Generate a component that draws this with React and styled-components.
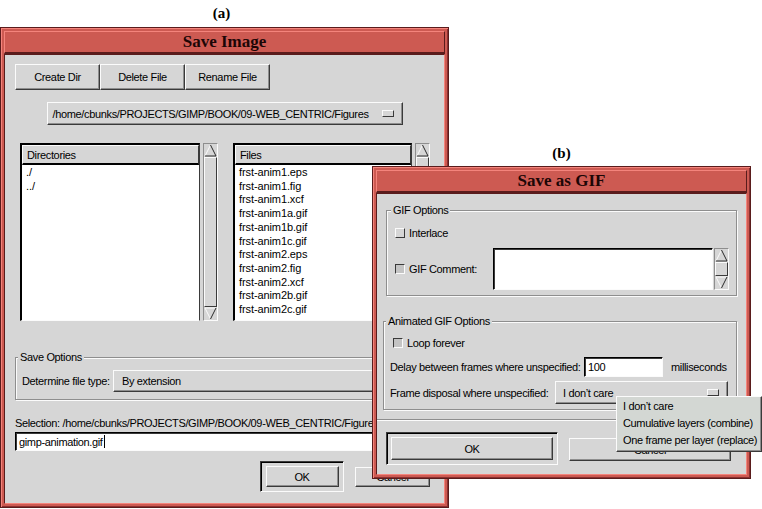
import React from 'react';
import styled, { createGlobalStyle, css } from 'styled-components';

const GlobalStyle = createGlobalStyle`
  html, body {
    margin: 0;
    padding: 0;
    background: #ffffff;
  }
  body {
    width: 762px;
    height: 509px;
    overflow: hidden;
    font-family: "Liberation Sans", Arial, sans-serif;
    font-size: 11px;
    letter-spacing: -0.35px;
    color: #000;
  }
  * {
    box-sizing: border-box;
  }
`;

const GRAY = '#d6d6d6';

const raised = css`
    border: 1px solid;
    border-color: #fbfbfb #3a3a3a #3a3a3a #fbfbfb;
    box-shadow: inset -1px -1px 0 #8e8e8e;
`;

const sunken = css`
    border: 1px solid;
    border-color: #3a3a3a #fbfbfb #fbfbfb #3a3a3a;
    box-shadow: inset 1px 1px 0 #000;
`;

const Desktop = styled.div`
    position: relative;
    width: 762px;
    height: 509px;
    overflow: hidden;
    background: #fff;
`;

// windows sit on a free desktop and overlap, so they are placed by coordinates
const Figure = styled.div`
    position: absolute;
    left: ${p => p.$x}px;
    top: ${p => p.$y}px;
    width: ${p => p.$w}px;
    z-index: ${p => p.$z};
`;

const Caption = styled.div`
    height: ${p => p.$h}px;
    display: flex;
    align-items: center;
    justify-content: center;
    padding-right: ${p => p.$shift || 0}px;
    font-family: "Liberation Serif", "Times New Roman", serif;
    font-weight: bold;
    font-size: 15px;
    letter-spacing: 0;
`;

const Frame = styled.div`
    height: ${p => p.$h}px;
    display: flex;
    flex-direction: column;
    background: #cd5a52;
    border: 1px solid #5a1c1c;
    box-shadow: inset 1px 1px 0 #f4847c, inset -1px -1px 0 #8a3030;
    padding: 3px;
`;

const TitleBar = styled.div`
    height: 23px;
    flex: none;
    display: flex;
    align-items: center;
    justify-content: center;
    background: #cd5a52;
    border: 1px solid;
    border-color: #f4847c #5a1c1c #5a1c1c #f4847c;
    border-bottom-width: 2px;
    font-family: "Liberation Serif", "Times New Roman", serif;
    font-size: 17px;
    font-weight: bold;
    letter-spacing: 0;
    color: #1c0606;
`;

const Body = styled.div`
    flex: 1;
    background: ${GRAY};
    border: 1px solid;
    border-color: #5a1c1c #f4847c #f4847c #5a1c1c;
    display: flex;
    flex-direction: column;
    overflow: hidden;
`;

const Row = styled.div`
    display: flex;
    align-items: ${p => p.$align || 'center'};
    justify-content: ${p => p.$justify || 'flex-start'};
    margin-top: ${p => p.$mt || 0}px;
    padding-left: ${p => p.$pl || 0}px;
    padding-right: ${p => p.$pr || 0}px;
    flex: none;
`;

const Button = styled.div`
    width: ${p => p.$w}px;
    height: ${p => p.$h}px;
    margin-left: ${p => p.$ml || 0}px;
    display: flex;
    align-items: center;
    justify-content: center;
    background: ${GRAY};
    ${raised};
    flex: none;
`;

const DefaultRing = styled.div`
    width: ${p => p.$w}px;
    height: ${p => p.$h}px;
    display: flex;
    align-items: center;
    justify-content: center;
    ${sunken};
    flex: none;
`;

const OptionMenu = styled.div`
    width: ${p => p.$w}px;
    height: ${p => p.$h}px;
    margin-left: ${p => p.$ml || 0}px;
    display: flex;
    align-items: center;
    justify-content: space-between;
    padding: 0 8px 0 ${p => p.$pl || 6}px;
    background: ${GRAY};
    ${raised};
    flex: none;
    white-space: nowrap;
`;

const OptionMark = styled.span`
    width: 12px;
    height: 7px;
    flex: none;
    ${raised};
    box-shadow: none;
`;

const ListBox = styled.div`
    width: ${p => p.$w}px;
    height: 178px;
    margin-left: ${p => p.$ml || 0}px;
    background: #fff;
    border: 1px solid;
    border-width: 2px 1px 1px 2px;
    border-color: #000 #3a3a3a #fbfbfb #000;
    display: flex;
    flex-direction: column;
    flex: none;
`;

const ListHeader = styled.div`
    height: 20px;
    flex: none;
    display: flex;
    align-items: center;
    padding-left: 4px;
    background: ${GRAY};
    border: 1px solid;
    border-color: #fbfbfb #3a3a3a #000 #fbfbfb;
    border-bottom-width: 2px;
`;

const ListItems = styled.div`
    padding: 1px 0 0 4px;
    line-height: 13.7px;
    letter-spacing: -0.1px;
    white-space: nowrap;
`;

const ScrollTrack = styled.div`
    width: 15px;
    height: ${p => p.$h}px;
    margin-left: ${p => p.$ml || 0}px;
    display: flex;
    flex-direction: column;
    background: ${GRAY};
    border: 1px solid;
    border-color: #8e8e8e #fbfbfb #fbfbfb #8e8e8e;
    flex: none;
`;

const ScrollThumb = styled.div`
    flex: 1;
    ${raised};
    box-shadow: none;
`;

const Arrow = ({ down }) => (
    <svg width="13" height="13" viewBox="0 0 13 13" style={{ display: 'block', flex: 'none' }}>
        {down ? (
            <>
                <polygon points="1,1 12,1 6.5,12" fill={GRAY} />
                <path d="M1 1 L12 1 M1 1 L6.5 12" stroke="#fbfbfb" fill="none" />
                <path d="M12 1 L6.5 12" stroke="#2a2a2a" fill="none" />
            </>
        ) : (
            <>
                <polygon points="6.5,1 12,12 1,12" fill={GRAY} />
                <path d="M1 12 L6.5 1" stroke="#fbfbfb" fill="none" />
                <path d="M6.5 1 L12 12 L1 12" stroke="#2a2a2a" fill="none" />
            </>
        )}
    </svg>
);

const Scrollbar = ({ h, ml }) => (
    <ScrollTrack $h={h} $ml={ml}>
        <Arrow />
        <ScrollThumb />
        <Arrow down />
    </ScrollTrack>
);

const Group = styled.fieldset`
    margin: ${p => p.$mt}px 0 0 ${p => p.$ml}px;
    width: ${p => p.$w}px;
    padding: ${p => p.$pt}px 6px ${p => p.$pb}px ${p => p.$pl}px;
    border: 1px solid #8e8e8e;
    box-shadow: 1px 1px 0 #fbfbfb, inset 1px 1px 0 #fbfbfb;
    flex: none;
    min-width: 0;
`;

const Legend = styled.legend`
    padding: 0 2px;
    margin-left: -4px;
    line-height: 13px;
    background: ${GRAY};
`;

const Label = styled.span`
    width: ${p => (p.$w ? `${p.$w}px` : 'auto')};
    margin-left: ${p => p.$ml || 0}px;
    flex: none;
    white-space: nowrap;
`;

const Check = styled.span`
    width: 10px;
    height: 10px;
    margin-left: ${p => p.$ml || 0}px;
    flex: none;
    background: ${p => (p.$on ? '#c4c4c4' : GRAY)};
    border: 1px solid;
    border-color: ${p => (p.$on ? '#3a3a3a #fbfbfb #fbfbfb #3a3a3a' : '#fbfbfb #3a3a3a #3a3a3a #fbfbfb')};
`;

const Entry = styled.div`
    width: ${p => p.$w}px;
    height: ${p => p.$h}px;
    margin-left: ${p => p.$ml || 0}px;
    margin-top: ${p => p.$mt || 0}px;
    display: flex;
    align-items: center;
    padding-left: 3px;
    background: #fff;
    border: 1px solid;
    border-color: #000 #fbfbfb #fbfbfb #000;
    box-shadow: inset 1px 1px 0 #3a3a3a;
    flex: none;
    white-space: nowrap;
`;

const Caret = styled.span`
    width: 1px;
    height: 13px;
    margin-left: 1px;
    background: #000;
`;

const SelectionLine = styled.div`
    margin-top: 17px;
    padding-left: 10px;
    line-height: 13px;
    white-space: nowrap;
    flex: none;
`;

const Separator = styled.div`
    margin-top: 9px;
    height: 2px;
    border-top: 1px solid #8e8e8e;
    border-bottom: 1px solid #fbfbfb;
    flex: none;
`;

const PopupMenu = styled.div`
    position: absolute;
    left: 616px;
    top: 396px;
    width: 146px;
    height: 56px;
    z-index: 10;
    padding: 1px 0 0 6px;
    background: #d3d7d3;
    border: 1px solid;
    border-color: #fbfbfb #3a3a3a #3a3a3a #fbfbfb;
    box-shadow: inset -1px -1px 0 #8e8e8e;
`;

const MenuItem = styled.div`
    line-height: 17px;
    white-space: nowrap;
`;

const files = [
    'frst-anim1.eps', 'frst-anim1.fig', 'frst-anim1.xcf', 'frst-anim1a.gif',
    'frst-anim1b.gif', 'frst-anim1c.gif', 'frst-anim2.eps', 'frst-anim2.fig',
    'frst-anim2.xcf', 'frst-anim2b.gif', 'frst-anim2c.gif',
];

const SaveImage = () => (
    <Figure $x={0} $y={0} $w={449} $z={1}>
        <Caption $h={27} $shift={6}>(a)</Caption>
        <Frame $h={481}>
            <TitleBar>Save Image</TitleBar>
            <Body>
                <Row $mt={9} $pl={10}>
                    <Button $w={85} $h={26}>Create Dir</Button>
                    <Button $w={85} $h={26}>Delete File</Button>
                    <Button $w={85} $h={26}>Rename File</Button>
                </Row>
                <Row $mt={12} $justify="center">
                    <OptionMenu $w={356} $h={23} $pl={5}>
                        /home/cbunks/PROJECTS/GIMP/BOOK/09-WEB_CENTRIC/Figures
                        <OptionMark />
                    </OptionMenu>
                </Row>
                <Row $mt={18} $pl={15} $align="flex-start">
                    <ListBox $w={180}>
                        <ListHeader>Directories</ListHeader>
                        <ListItems>
                            <div>./</div>
                            <div>../</div>
                        </ListItems>
                    </ListBox>
                    <Scrollbar h={178} ml={3} />
                    <ListBox $w={179} $ml={15}>
                        <ListHeader>Files</ListHeader>
                        <ListItems>
                            {files.map(f => <div key={f}>{f}</div>)}
                        </ListItems>
                    </ListBox>
                    <Scrollbar h={178} ml={3} />
                </Row>
                <Group $mt={30} $ml={10} $w={420} $pt={6} $pb={7} $pl={6}>
                    <Legend>Save Options</Legend>
                    <Row>
                        <Label $w={91}>Determine file type:</Label>
                        <OptionMenu $w={300} $h={22} $pl={8}>By extension</OptionMenu>
                    </Row>
                </Group>
                <SelectionLine>
                    Selection: /home/cbunks/PROJECTS/GIMP/BOOK/09-WEB_CENTRIC/Figures
                </SelectionLine>
                <Entry $w={420} $h={19} $ml={10} $mt={2}>
                    gimp-animation.gif<Caret />
                </Entry>
                <Row $mt={10} $justify="flex-end" $pr={14} $align="flex-start">
                    <DefaultRing $w={84} $h={31}>
                        <Button $w={73} $h={21}>OK</Button>
                    </DefaultRing>
                    <Row $mt={6}>
                        <Button $w={75} $h={20} $ml={11}>Cancel</Button>
                    </Row>
                </Row>
            </Body>
        </Frame>
    </Figure>
);

const SaveGif = () => (
    <Figure $x={372} $y={140} $w={379} $z={2}>
        <Caption $h={26}>(b)</Caption>
        <Frame $h={313}>
            <TitleBar>Save as GIF</TitleBar>
            <Body>
                <Group $mt={10} $ml={9} $w={351} $pt={10} $pb={5} $pl={8}>
                    <Legend>GIF Options</Legend>
                    <Row>
                        <Check />
                        <Label $ml={4}>Interlace</Label>
                    </Row>
                    <Row $mt={9}>
                        <Label $w={98}>
                            <Row>
                                <Check $on />
                                <Label $ml={4}>GIF Comment:</Label>
                            </Row>
                        </Label>
                        <Entry $w={220} $h={42} />
                        <Scrollbar h={42} ml={1} />
                    </Row>
                </Group>
                <Group $mt={19} $ml={6} $w={354} $pt={9} $pb={5} $pl={6}>
                    <Legend>Animated GIF Options</Legend>
                    <Row>
                        <Check $on $ml={3} />
                        <Label $ml={4}>Loop forever</Label>
                    </Row>
                    <Row $mt={8}>
                        <Label $w={194}>Delay between frames where unspecified:</Label>
                        <Entry $w={79} $h={20}>100</Entry>
                        <Label $ml={8}>milliseconds</Label>
                    </Row>
                    <Row $mt={4}>
                        <Label $w={165}>Frame disposal where unspecified:</Label>
                        <OptionMenu $w={173} $h={23} $pl={7}>
                            I don’t care
                            <OptionMark />
                        </OptionMenu>
                    </Row>
                </Group>
                <Separator />
                <Row $mt={11} $pl={9} $align="flex-start">
                    <DefaultRing $w={172} $h={33}>
                        <Button $w={162} $h={23}>OK</Button>
                    </DefaultRing>
                    <Row $mt={6}>
                        <Button $w={162} $h={23} $ml={11}>Cancel</Button>
                    </Row>
                </Row>
            </Body>
        </Frame>
    </Figure>
);

const App = () => (
    <>
        <GlobalStyle />
        <Desktop>
            <SaveImage />
            <SaveGif />
            <PopupMenu>
                <MenuItem>I don’t care</MenuItem>
                <MenuItem>Cumulative layers (combine)</MenuItem>
                <MenuItem>One frame per layer (replace)</MenuItem>
            </PopupMenu>
        </Desktop>
    </>
);

export default App;
